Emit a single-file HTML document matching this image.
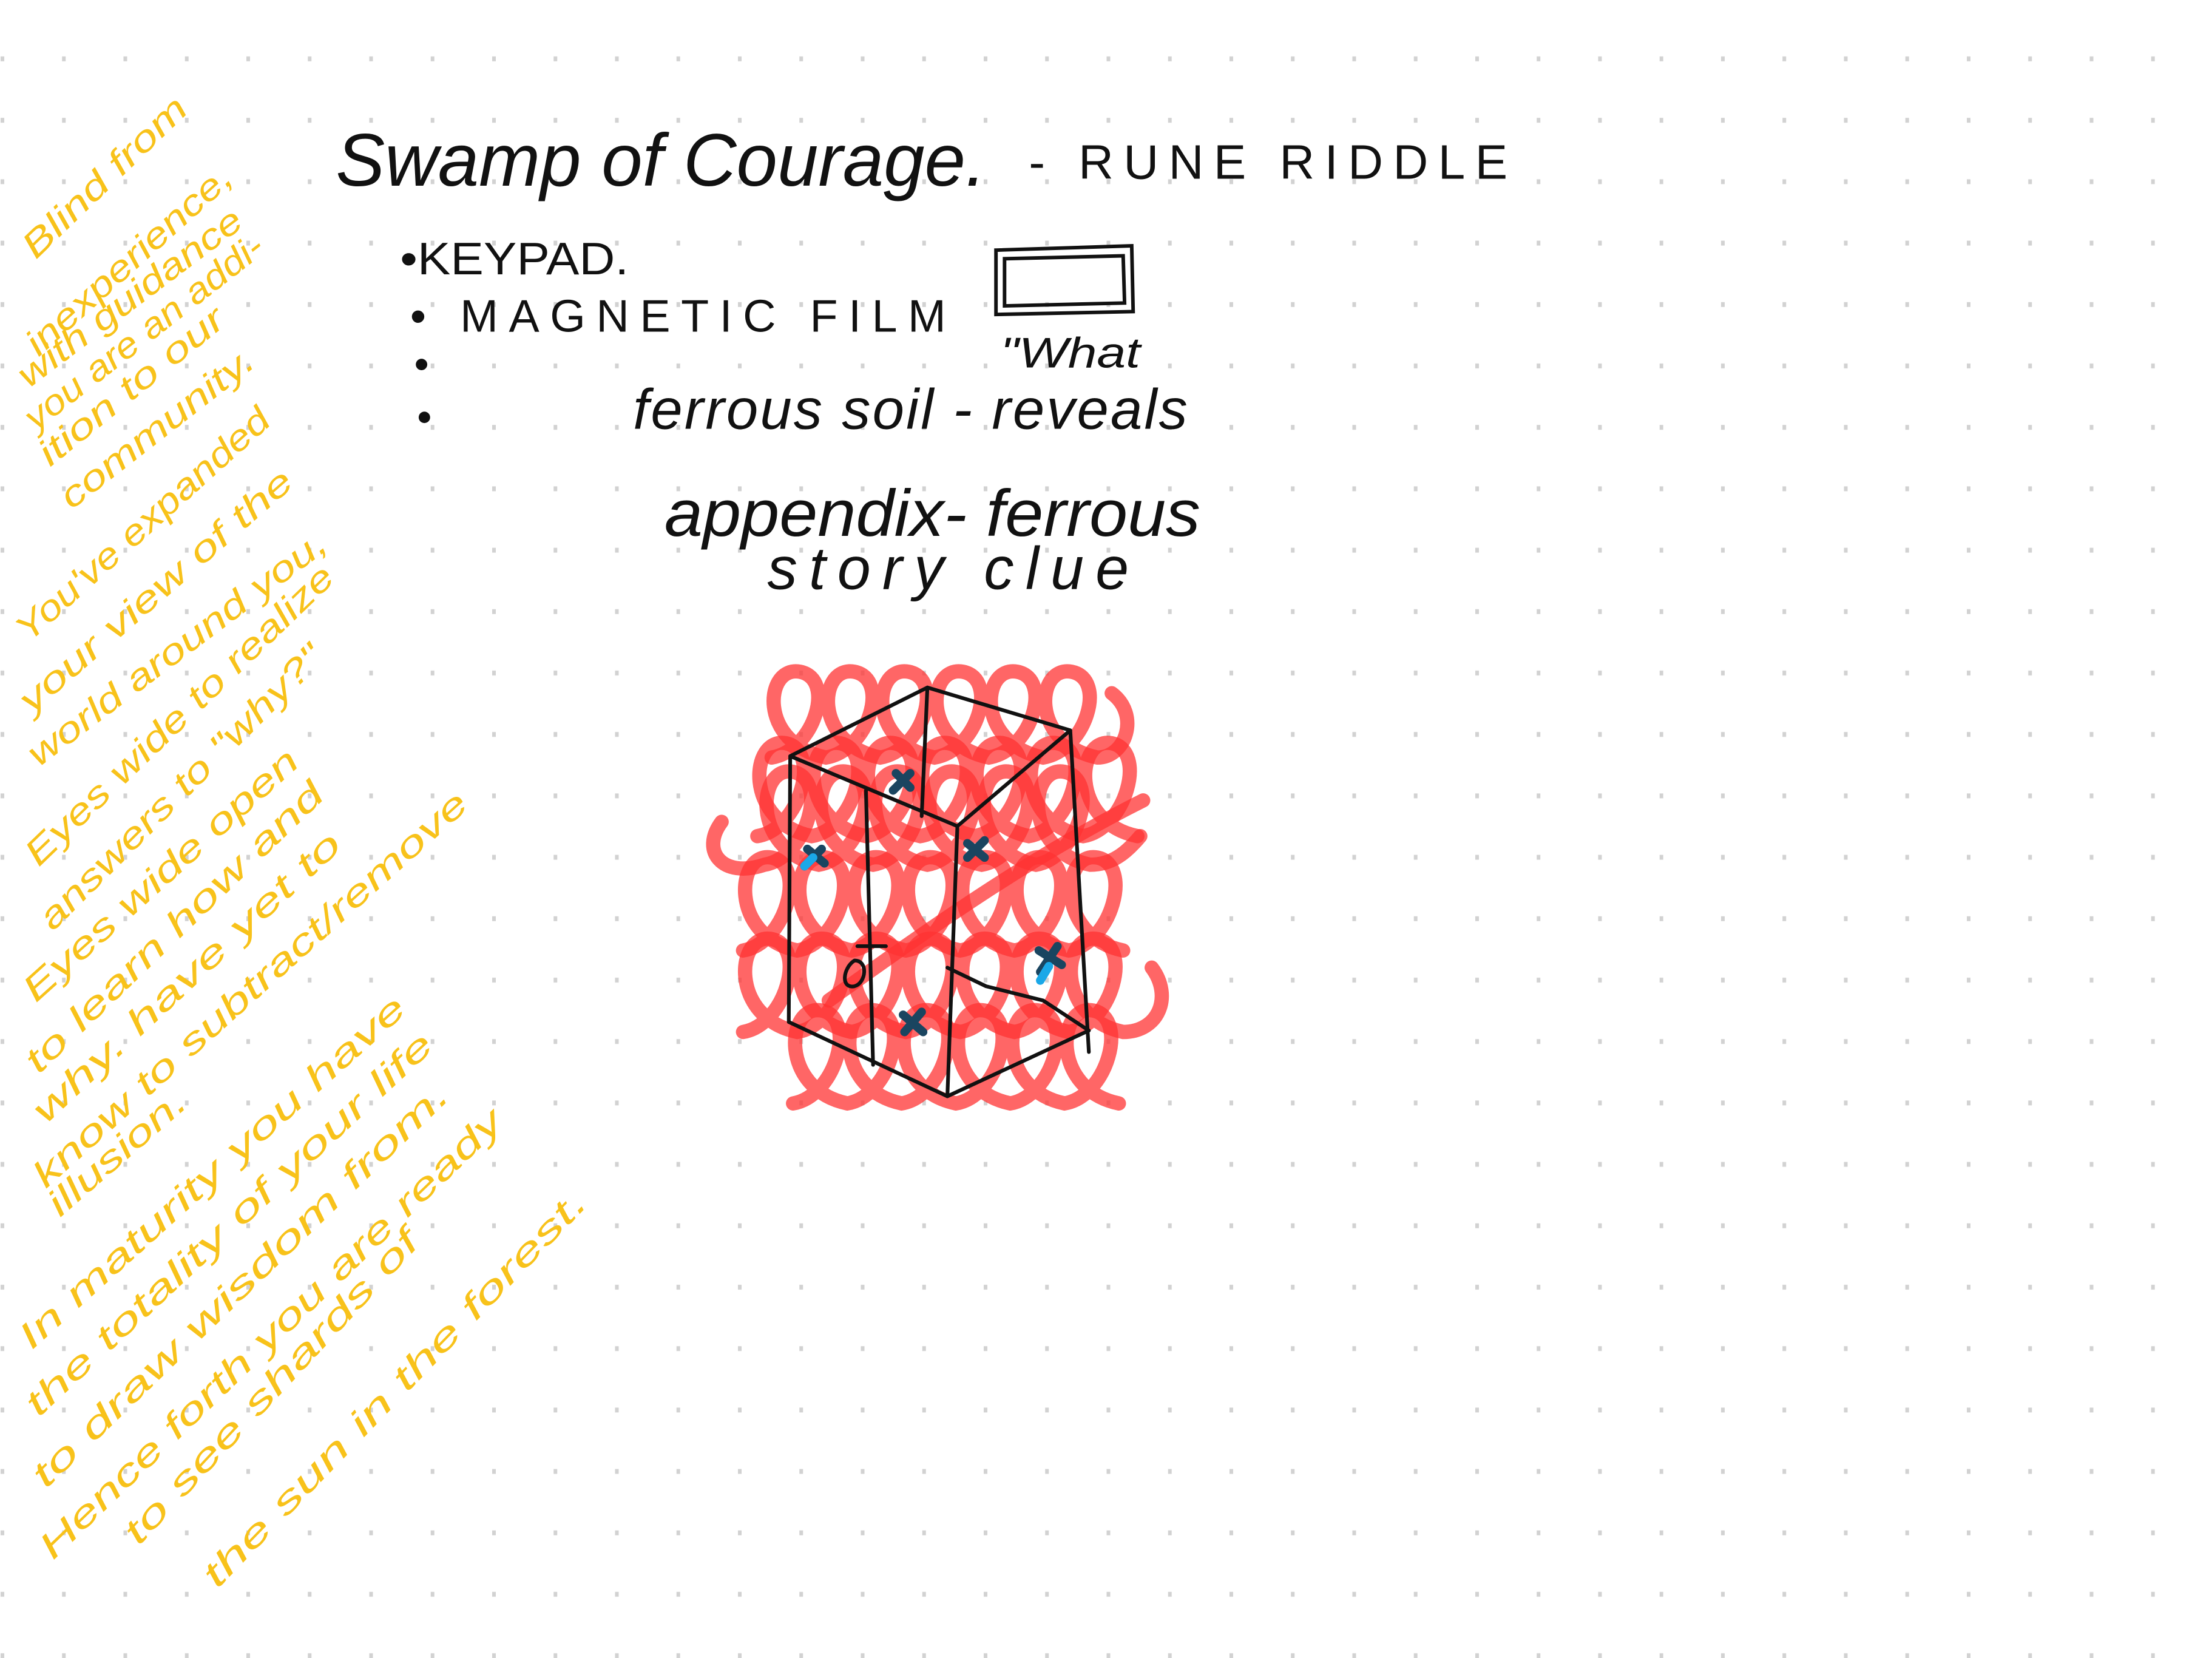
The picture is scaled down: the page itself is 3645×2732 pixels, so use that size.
<!DOCTYPE html>
<html><head><meta charset="utf-8"><style>
html,body{margin:0;padding:0;background:#fff;}
body{width:3645px;height:2732px;overflow:hidden;position:relative;}
svg{position:absolute;left:0;top:0;}
.k{font-family:"Liberation Sans",sans-serif;fill:#111;}
.y{font-family:"Liberation Sans",sans-serif;font-style:italic;fill:#f8c21a;font-size:25px;}
</style></head><body>
<svg width="3645" height="2732" viewBox="0 0 3645 2732">
<defs><pattern id="d" x="0" y="0" width="101.25" height="101.2" patternUnits="userSpaceOnUse"><rect x="1" y="93" width="6" height="8" fill="#d2d2d2"/></pattern></defs>
<rect width="3645" height="2732" fill="url(#d)"/>
</svg>
<svg width="3645" height="2732" viewBox="0 0 1548 1160" preserveAspectRatio="none">
<text class="k" x="235" y="130" font-size="52" textLength="455" lengthAdjust="spacingAndGlyphs" font-style="italic">Swamp of Courage.</text>
<text class="k" x="720" y="125" font-size="34" textLength="335" lengthAdjust="spacing">- RUNE RIDDLE</text>
<text class="k" x="280" y="192" font-size="32" textLength="160" lengthAdjust="spacingAndGlyphs">•KEYPAD.</text>
<text class="k" x="287" y="232" font-size="32" textLength="375" lengthAdjust="spacing">• MAGNETIC FILM</text>
<circle cx="295" cy="255" r="4" fill="#111"/><circle cx="297" cy="292" r="4" fill="#111"/>
<path d="M697 175 L792 172 L793 218 L697 220 Z M703 181 L786 179 L787 212 L703 214 Z" fill="none" stroke="#111" stroke-width="2.5"/>
<text class="k" x="700" y="257" font-size="30" font-style="italic" textLength="98" lengthAdjust="spacingAndGlyphs">"What</text>
<text class="k" x="443" y="300" font-size="40" font-style="italic" textLength="388" lengthAdjust="spacing">ferrous soil - reveals</text>
<text class="k" x="465" y="375" font-size="46" font-style="italic" textLength="375" lengthAdjust="spacingAndGlyphs">appendix- ferrous</text>
<text class="k" x="537" y="412" font-size="42" font-style="italic" textLength="253" lengthAdjust="spacing">story clue</text>
<g fill="none" stroke="#ff3333" stroke-opacity="0.75" stroke-width="10" stroke-linecap="round">
<path d="M540 530 c30 -5 45 -55 20 -60 c-25 -5 -30 50 18 60 c30 -5 45 -55 20 -60 c-25 -5 -30 50 18 60 c30 -5 45 -55 20 -60 c-25 -5 -30 50 18 60 c30 -5 45 -55 20 -60 c-25 -5 -30 50 18 60 c30 -5 45 -55 20 -60 c-25 -5 -30 50 18 60 c30 -5 45 -55 20 -60 c-25 -5 -30 50 18 60 c20 0 30 -30 10 -45"/>
<path d="M530 585 c30 -5 45 -60 20 -65 c-25 -5 -30 55 18 65 c30 -5 45 -60 20 -65 c-25 -5 -30 55 18 65 c30 -5 45 -60 20 -65 c-25 -5 -30 55 18 65 c30 -5 45 -60 20 -65 c-25 -5 -30 55 18 65 c30 -5 45 -60 20 -65 c-25 -5 -30 55 18 65 c30 -5 45 -60 20 -65 c-25 -5 -30 55 18 65 c30 -5 45 -60 20 -65 c-25 -5 -30 55 18 65"/>
<path d="M505 575 c-15 20 0 40 30 30 c30 -5 45 -60 20 -65 c-25 -5 -30 55 18 65 c30 -5 45 -60 20 -65 c-25 -5 -30 55 18 65 c30 -5 45 -60 20 -65 c-25 -5 -30 55 18 65 c30 -5 45 -60 20 -65 c-25 -5 -30 55 18 65 c30 -5 45 -60 20 -65 c-25 -5 -30 55 18 65 c30 -5 45 -60 20 -65 c-25 -5 -30 55 18 65 c15 0 25 -8 35 -20"/>
<path d="M520 665 c30 -5 45 -60 20 -65 c-25 -5 -30 55 18 65 c30 -5 45 -60 20 -65 c-25 -5 -30 55 18 65 c30 -5 45 -60 20 -65 c-25 -5 -30 55 18 65 c30 -5 45 -60 20 -65 c-25 -5 -30 55 18 65 c30 -5 45 -60 20 -65 c-25 -5 -30 55 18 65 c30 -5 45 -60 20 -65 c-25 -5 -30 55 18 65 c30 -5 45 -60 20 -65 c-25 -5 -30 55 18 65"/>
<path d="M520 722 c30 -5 45 -60 20 -65 c-25 -5 -30 55 18 65 c30 -5 45 -60 20 -65 c-25 -5 -30 55 18 65 c30 -5 45 -60 20 -65 c-25 -5 -30 55 18 65 c30 -5 45 -60 20 -65 c-25 -5 -30 55 18 65 c30 -5 45 -60 20 -65 c-25 -5 -30 55 18 65 c30 -5 45 -60 20 -65 c-25 -5 -30 55 18 65 c30 -5 45 -60 20 -65 c-25 -5 -30 55 18 65 c25 0 35 -25 20 -45"/>
<path d="M555 772 c30 -5 45 -60 20 -65 c-25 -5 -30 55 18 65 c30 -5 45 -60 20 -65 c-25 -5 -30 55 18 65 c30 -5 45 -60 20 -65 c-25 -5 -30 55 18 65 c30 -5 45 -60 20 -65 c-25 -5 -30 55 18 65 c30 -5 45 -60 20 -65 c-25 -5 -30 55 18 65 c30 -5 45 -60 20 -65 c-25 -5 -30 55 18 65"/>
<path d="M580 700 C650 650 720 600 800 560"/>
</g>
<g fill="none" stroke="#111" stroke-width="2.6" stroke-linecap="round" stroke-linejoin="round">
<path d="M553 529 L649 481 L749 511 L670 578 L553 529 Z"/>
<path d="M553 529 L552 715 L663 767 L762 721"/>
<path d="M606 553 L611 745"/><path d="M649 481 L645 571"/><path d="M670 578 L663 767"/>
<path d="M749 511 L762 736"/><path d="M663 677 L690 690 L730 700 L762 721"/>
<path d="M600 662 l20 0 M598 672 c-8 5 -10 20 0 18 c8 -2 10 -18 0 -18 z"/>
</g>
<g stroke-width="6" stroke-linecap="round">
<path d="M625 553 l12 -12 M627 541 l10 10" stroke="#1a4560"/>
<path d="M563 606 l12 -12 M565 594 l12 10" stroke="#1a4560"/><path d="M563 606 l6 -6" stroke="#1aa8e8"/>
<path d="M677 600 l12 -12 M677 590 l12 10" stroke="#1a4560"/>
<path d="M728 680 l12 -18 M727 665 l16 10" stroke="#1a4560"/><path d="M728 686 l6 -10" stroke="#1aa8e8"/>
<path d="M633 722 l12 -14 M632 710 l14 12" stroke="#1a4560"/>
</g>
<g class="y">
<text transform="translate(25,182) rotate(-44)" textLength="150" lengthAdjust="spacingAndGlyphs">Blind from</text>
<text transform="translate(27,250) rotate(-42)" textLength="185" lengthAdjust="spacingAndGlyphs">inexperience,</text>
<text transform="translate(20,272) rotate(-37)" textLength="190" lengthAdjust="spacingAndGlyphs">with guidance</text>
<text transform="translate(25,302) rotate(-38)" textLength="205" lengthAdjust="spacingAndGlyphs">you are an addi-</text>
<text transform="translate(35,327) rotate(-39)" textLength="160" lengthAdjust="spacingAndGlyphs">ition to our</text>
<text transform="translate(50,357) rotate(-38)" textLength="165" lengthAdjust="spacingAndGlyphs">community.</text>
<text transform="translate(20,450) rotate(-42)" textLength="230" lengthAdjust="spacingAndGlyphs">You've expanded</text>
<text transform="translate(22,500) rotate(-41)" textLength="245" lengthAdjust="spacingAndGlyphs">your view of the</text>
<text transform="translate(27,537) rotate(-37)" textLength="255" lengthAdjust="spacingAndGlyphs">world around you,</text>
<text transform="translate(27,607) rotate(-44)" textLength="290" lengthAdjust="spacingAndGlyphs">Eyes wide to realize</text>
<text transform="translate(37,652) rotate(-45)" textLength="270" lengthAdjust="spacingAndGlyphs">answers to "why?"</text>
<text transform="translate(25,702) rotate(-42)" textLength="250" lengthAdjust="spacingAndGlyphs">Eyes wide open</text>
<text transform="translate(27,752) rotate(-44)" textLength="280" lengthAdjust="spacingAndGlyphs">to learn how and</text>
<text transform="translate(32,787) rotate(-43)" textLength="285" lengthAdjust="spacingAndGlyphs">why. have yet to</text>
<text transform="translate(32,832) rotate(-42)" textLength="400" lengthAdjust="spacingAndGlyphs">know to subtract/remove</text>
<text transform="translate(42,852) rotate(-41)" textLength="120" lengthAdjust="spacingAndGlyphs">illusion.</text>
<text transform="translate(22,945) rotate(-42)" textLength="355" lengthAdjust="spacingAndGlyphs">In maturity you have</text>
<text transform="translate(27,992) rotate(-43)" textLength="380" lengthAdjust="spacingAndGlyphs">the totality of your life</text>
<text transform="translate(32,1042) rotate(-44)" textLength="395" lengthAdjust="spacingAndGlyphs">to draw wisdom from.</text>
<text transform="translate(37,1092) rotate(-44)" textLength="440" lengthAdjust="spacingAndGlyphs">Hence forth you are ready</text>
<text transform="translate(97,1082) rotate(-47)" textLength="290" lengthAdjust="spacingAndGlyphs">to see shards of</text>
<text transform="translate(152,1112) rotate(-46)" textLength="375" lengthAdjust="spacingAndGlyphs">the sun in the forest.</text>
</g>
</svg>
</body></html>
